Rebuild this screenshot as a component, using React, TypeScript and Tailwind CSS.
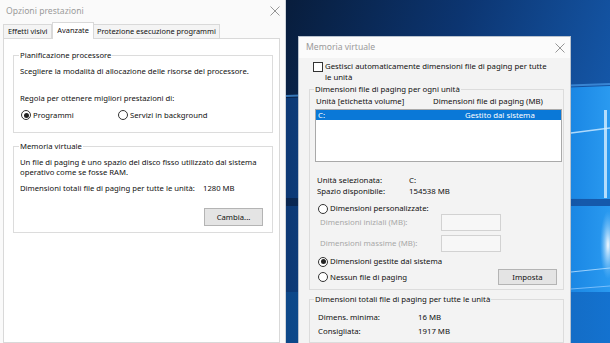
import React from "react";

function CloseX({ className = "" }: { className?: string }) {
  return (
    <svg width="10" height="10" viewBox="0 0 10 10" className={className}>
      <path d="M0.5 0.5 L9.5 9.5 M9.5 0.5 L0.5 9.5" stroke="#8a8a8a" strokeWidth="0.9" fill="none" />
    </svg>
  );
}

function Radio({ checked = false }: { checked?: boolean }) {
  return (
    <span className="flex h-[10px] w-[10px] shrink-0 items-center justify-center rounded-full border border-[#333] bg-white">
      {checked && <span className="h-[5px] w-[5px] rounded-full bg-[#222]" />}
    </span>
  );
}

function Wallpaper() {
  return (
    <svg width="324" height="343" viewBox="0 0 324 343" className="absolute inset-0">
      <defs>
        <linearGradient id="sky" x1="0" y1="0" x2="1" y2="0.35">
          <stop offset="0" stopColor="#081d3c" />
          <stop offset="0.5" stopColor="#0c3571" />
          <stop offset="1" stopColor="#1559ab" />
        </linearGradient>
        <linearGradient id="pane" x1="0" y1="0" x2="1" y2="0">
          <stop offset="0" stopColor="#0c3874" />
          <stop offset="0.7" stopColor="#136bc6" />
          <stop offset="0.9" stopColor="#1d8ae6" />
          <stop offset="1" stopColor="#2a9af0" />
        </linearGradient>
        <linearGradient id="low" x1="0" y1="0" x2="1" y2="0">
          <stop offset="0" stopColor="#0c4788" />
          <stop offset="1" stopColor="#1472cf" />
        </linearGradient>
        <radialGradient id="glow" cx="0.5" cy="0.5" r="0.5">
          <stop offset="0" stopColor="#ffffff" stopOpacity="0.95" />
          <stop offset="1" stopColor="#8fd0ff" stopOpacity="0" />
        </radialGradient>
      </defs>
      <rect width="324" height="343" fill="url(#sky)" />
      <rect y="290" width="324" height="53" fill="url(#low)" />
      <polygon points="0,98 324,86 324,199 0,198" fill="url(#pane)" />
      <polygon points="0,206 324,206 324,292 0,292" fill="url(#pane)" />
      <line x1="0" y1="96" x2="324" y2="84" stroke="#4a9be8" strokeWidth="2" opacity="0.7" />
      <line x1="285" y1="133" x2="324" y2="128" stroke="#bfe3ff" strokeWidth="1.5" opacity="0.9" />
      <line x1="285" y1="272" x2="324" y2="268" stroke="#a8d8ff" strokeWidth="1.2" opacity="0.9" />
      <line x1="285" y1="289" x2="324" y2="286" stroke="#8cc8ff" strokeWidth="1" opacity="0.8" />
      <rect x="318" y="110" width="3" height="88" fill="#d6efff" opacity="0.8" />
      <ellipse cx="322" cy="245" rx="8" ry="34" fill="url(#glow)" />
    </svg>
  );
}

export default function App() {
  return (
    <div className="flex h-[343px] w-[610px] overflow-hidden bg-white font-['Noto_Sans','Open_Sans',sans-serif] text-[#111]">
      {/* Opzioni prestazioni */}
      <div className="flex w-[286px] shrink-0 flex-col border-r border-[#cfd4da] bg-[#fafafa]">
        <div className="flex h-[22px] shrink-0 items-center justify-between pl-[6px] pr-[5px]">
          <span className="text-[8.6px] leading-none text-[#9a9a9a]">Opzioni prestazioni</span>
          <CloseX />
        </div>
        <div className="flex h-[16px] shrink-0 items-end pl-[3px] text-[7.4px]">
          <div className="flex h-[14px] items-center border border-b-0 border-[#d9d9d9] bg-[#f4f4f4] px-[4px]">Effetti visivi</div>
          <div className="relative z-10 -mb-px flex h-[17px] items-center border border-b-0 border-[#d9d9d9] bg-white px-[4px]">Avanzate</div>
          <div className="flex h-[14px] items-center border border-b-0 border-l-0 border-[#d9d9d9] bg-[#f4f4f4] px-[3px]">Protezione esecuzione programmi</div>
        </div>
        <div className="ml-[3px] mr-[5px] flex-1 border border-[#d9d9d9] bg-white pl-[9px] pr-[6px] pt-[11px] text-[7.7px] leading-[10px]">
          <fieldset className="border border-[#dcdcdc] px-[6px] pb-[12px]">
            <legend className="-ml-px px-px">Pianificazione processore</legend>
            <div className="mt-[6px] whitespace-nowrap">Scegliere la modalità di allocazione delle risorse del processore.</div>
            <div className="mt-[17px]">Regola per ottenere migliori prestazioni di:</div>
            <div className="mt-[7px] flex items-center">
              <div className="flex w-[98px] items-center gap-[2px] pl-[1px]">
                <Radio checked />
                <span>Programmi</span>
              </div>
              <div className="flex items-center gap-[2px]">
                <Radio />
                <span>Servizi in background</span>
              </div>
            </div>
          </fieldset>
          <fieldset className="mt-[8px] border border-[#dcdcdc] px-[6px] pb-[6px]">
            <legend className="-ml-px px-px">Memoria virtuale</legend>
            <div className="mt-[6px] whitespace-nowrap">
              Un file di paging è uno spazio del disco fisso utilizzato dal sistema
              <br />
              operativo come se fosse RAM.
            </div>
            <div className="mt-[6px] flex whitespace-nowrap">
              <span className="w-[183px]">Dimensioni totali file di paging per tutte le unità:</span>
              <span>1280 MB</span>
            </div>
            <div className="mt-[15px] flex justify-end pr-[3px]">
              <button className="flex h-[18px] w-[59px] items-center justify-center border border-[#b4b4b4] bg-[#e4e4e4]">
                Cambia...
              </button>
            </div>
          </fieldset>
        </div>
      </div>

      {/* Desktop */}
      <div className="relative flex-1 pl-[12px] pt-[36px]">
        <Wallpaper />
        <div className="relative flex h-[320px] w-[273px] flex-col border border-[#b8c2ce] bg-[#f3f3f3] text-[7.8px] leading-[11px]">
          <div className="flex h-[21px] shrink-0 items-center justify-between bg-[#fbfbfb] pl-[7px] pr-[5px]">
            <span className="text-[8.6px] text-[#9a9a9a]">Memoria virtuale</span>
            <CloseX />
          </div>
          <div className="flex pl-[14px] pt-[3px]">
            <span className="mt-px h-[10px] w-[10px] shrink-0 border border-[#333] bg-white" />
            <span className="whitespace-nowrap pl-[2px]">
              Gestisci automaticamente dimensioni file di paging per tutte
              <br />
              le unità
            </span>
          </div>
          <fieldset className="ml-[10px] mr-[6px] mt-[1px] border border-[#dcdcdc] pb-[4px] pl-[5px] pr-px">
            <legend className="-ml-px px-px">Dimensioni file di paging per ogni unità</legend>
            <div className="mt-px flex pl-px">
              <span className="w-[117px]">Unità [etichetta volume]</span>
              <span>Dimensioni file di paging (MB)</span>
            </div>
            <div className="mt-[2px] h-[53px] border border-[#a9a9a9] bg-white">
              <div className="flex h-[10px] items-center bg-[#0a78d7] pl-[2px] text-white">
                <span className="w-[147px]">C:</span>
                <span>Gestito dal sistema</span>
              </div>
            </div>
            <div className="mt-[13px] flex pl-[2px]">
              <span className="w-[92px]">Unità selezionata:</span>
              <span>C:</span>
            </div>
            <div className="flex pl-[2px]">
              <span className="w-[92px]">Spazio disponibile:</span>
              <span>154538 MB</span>
            </div>
            <div className="mt-[6px] flex items-center gap-[2px] pl-[3px]">
              <Radio />
              <span>Dimensioni personalizzate:</span>
            </div>
            <div className="flex h-[17px] items-center pl-[5px] text-[#a8a8a8]">
              <span className="w-[121px]">Dimensioni iniziali (MB):</span>
              <span className="h-[17px] w-[60px] border border-[#d2d2d2] bg-[#f7f7f7]" />
            </div>
            <div className="mt-[4px] flex h-[17px] items-center pl-[5px] text-[#a8a8a8]">
              <span className="w-[121px]">Dimensioni massime (MB):</span>
              <span className="h-[17px] w-[60px] border border-[#d2d2d2] bg-[#f7f7f7]" />
            </div>
            <div className="mt-[4px] flex items-center gap-[2px] pl-[3px]">
              <Radio checked />
              <span>Dimensioni gestite dal sistema</span>
            </div>
            <div className="mt-[2px] flex h-[16px] items-center justify-between pl-[3px] pr-[5px]">
              <div className="flex items-center gap-[2px]">
                <Radio />
                <span>Nessun file di paging</span>
              </div>
              <button className="flex h-[16px] w-[59px] items-center justify-center border border-[#b4b4b4] bg-[#e4e4e4]">
                Imposta
              </button>
            </div>
          </fieldset>
          <fieldset className="ml-[10px] mr-[6px] mt-[4px] border border-[#dcdcdc] pb-[4px] pl-[5px] pr-px">
            <legend className="-ml-px px-px">Dimensioni totali file di paging per tutte le unità</legend>
            <div className="mt-[5px] flex h-[14px] items-center pl-[3px]">
              <span className="w-[100px]">Dimens. minima:</span>
              <span>16 MB</span>
            </div>
            <div className="flex h-[14px] items-center pl-[3px]">
              <span className="w-[100px]">Consigliata:</span>
              <span>1917 MB</span>
            </div>
          </fieldset>
        </div>
      </div>
    </div>
  );
}
